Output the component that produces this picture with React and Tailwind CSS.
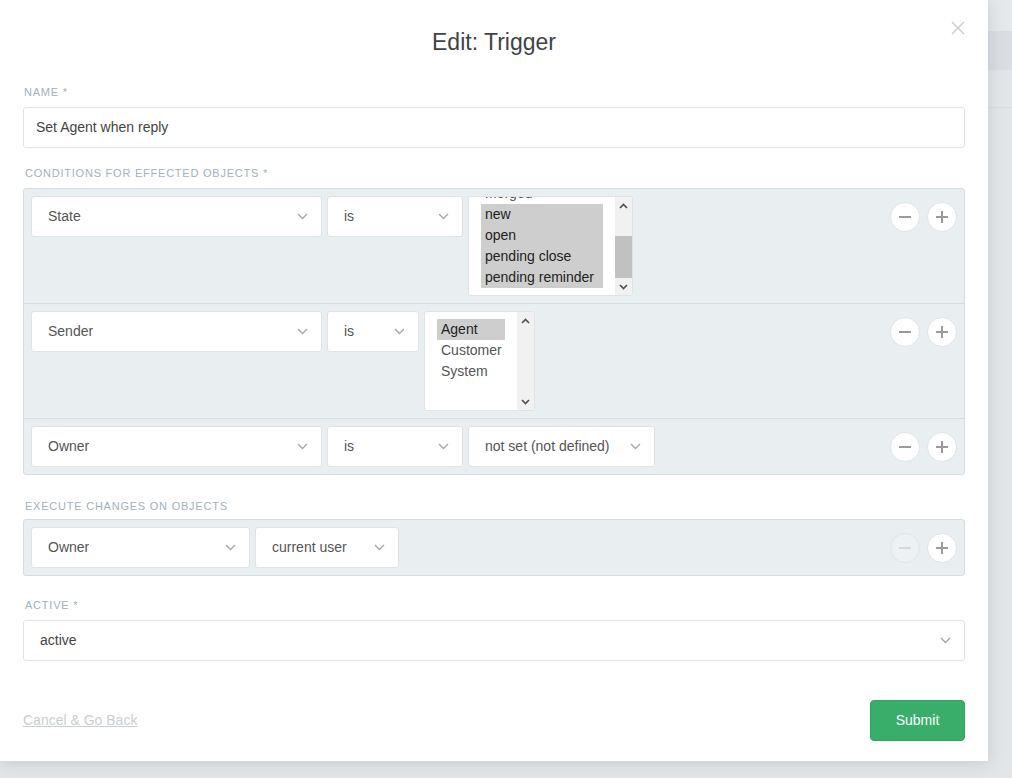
import React from 'react';

const FONT = { fontFamily: '"Liberation Sans", Arial, sans-serif' };

const Chevron = ({ className = '' }) => (
    <svg width="11" height="7" viewBox="0 0 11 7" className={className}>
        <polyline points="1,1 5.5,5.5 10,1" fill="none" stroke="#a3a8ab" strokeWidth="1.4" />
    </svg>
);

const SelectBox = ({ value, width }) => (
    <div
        className="h-[41px] shrink-0 flex items-center justify-between pl-4 pr-[13px] bg-white border border-[#dfe3e6] rounded-[3px] text-[14px] text-[#555]"
        style={{ width }}
    >
        <span className="truncate">{value}</span>
        <Chevron />
    </div>
);

const ScrollArrow = ({ up }) => (
    <div className="h-[17px] flex items-center justify-center">
        <svg width="9" height="6" viewBox="0 0 9 6">
            <polyline
                points={up ? '1,5 4.5,1.5 8,5' : '1,1 4.5,4.5 8,1'}
                fill="none"
                stroke="#505050"
                strokeWidth="1.7"
            />
        </svg>
    </div>
);

// fake multi-select listbox, items highlighted when selected
const ListBox = ({ width, items, offset = 0, thumb }) => (
    <div className="h-[100px] shrink-0 flex bg-white border border-[#dfe3e6] rounded-[3px] overflow-hidden" style={{ width }}>
        <div className="flex-1 overflow-hidden px-3 pt-[7px]">
            <div style={{ marginTop: offset }}>
                {items.map(it => (
                    <div
                        key={it.label}
                        className={`h-[21px] leading-[21px] px-1 text-[14px] whitespace-nowrap ${it.selected ? 'bg-[#cecece] text-[#222]' : 'text-[#555]'}`}
                    >
                        {it.label}
                    </div>
                ))}
            </div>
        </div>
        <div className="w-[17px] bg-[#f1f1f1] flex flex-col">
            <ScrollArrow up />
            <div className="flex-1 flex flex-col justify-end">
                {thumb && <div className="h-[42px] bg-[#c1c1c1]" />}
            </div>
            <ScrollArrow />
        </div>
    </div>
);

const RoundBtn = ({ minus, disabled }) => (
    <div
        className={`w-[30px] h-[30px] rounded-full border border-[#dfe4e7] flex items-center justify-center ${disabled ? 'bg-[#edf1f3]' : 'bg-white'}`}
    >
        <svg width="12" height="12" viewBox="0 0 12 12">
            <line x1="0" y1="6" x2="12" y2="6" stroke={disabled ? '#d3d8db' : '#9a9a9a'} strokeWidth="2" />
            {!minus && <line x1="6" y1="0" x2="6" y2="12" stroke="#9a9a9a" strokeWidth="2" />}
        </svg>
    </div>
);

const Row = ({ children, last, minusDisabled }) => (
    <div className={`flex items-start gap-[5px] p-[7px] ${last ? '' : 'border-b border-[#d5dde2]'}`}>
        {children}
        <div className="ml-auto h-[41px] flex items-center gap-[7px]">
            <RoundBtn minus disabled={minusDisabled} />
            <RoundBtn />
        </div>
    </div>
);

const Label = ({ children, className = '' }) => (
    <div className={`text-[11px] leading-[16px] uppercase tracking-[0.07em] text-[#a3b1b9] ${className}`}>{children}</div>
);

const stateItems = [
    { label: 'merged' },
    { label: 'new', selected: true },
    { label: 'open', selected: true },
    { label: 'pending close', selected: true },
    { label: 'pending reminder', selected: true },
];

const senderItems = [
    { label: 'Agent', selected: true },
    { label: 'Customer' },
    { label: 'System' },
];

export default function App() {
    return (
        <div className="relative w-[1012px] h-[778px] overflow-hidden bg-[#e2e5e8]" style={FONT}>
            {/* page behind the backdrop */}
            <div className="flex flex-col h-full">
                <div className="h-[31px] bg-[#e6e9ec]" />
                <div className="h-[39px] bg-[#dadee2]" />
                <div className="h-[38px] bg-[#e3e6e9] border-b border-[#dadde1]" />
                <div className="flex-1 bg-[#e3e6e9]" />
            </div>

            <div className="absolute top-0 left-0 w-[988px] h-[761px] bg-white shadow-[0_2px_16px_rgba(60,70,80,0.18)] px-[23px]">
                <svg width="14" height="14" viewBox="0 0 14 14" className="absolute top-[21px] right-[23px]">
                    <line x1="1" y1="1" x2="13" y2="13" stroke="#c9cdd0" strokeWidth="1.5" />
                    <line x1="13" y1="1" x2="1" y2="13" stroke="#c9cdd0" strokeWidth="1.5" />
                </svg>

                <h1 className="pt-[28px] h-[84px] text-center text-[23px] leading-[28px] text-[#3f4448]">Edit: Trigger</h1>

                <Label className="pl-[1px]">Name *</Label>
                <div className="mt-[7px] h-[41px] flex items-center px-3 border border-[#dfe3e6] rounded-[3px] text-[14px] text-[#444]">
                    Set Agent when reply
                </div>

                <Label className="mt-[17px] pl-[2px]">Conditions for effected objects *</Label>
                <div className="mt-[7px] bg-[#e9eef1] border border-[#d5dde2] rounded-[3px]">
                    <Row>
                        <SelectBox value="State" width={291} />
                        <SelectBox value="is" width={136} />
                        <ListBox width={165} items={stateItems} offset={-21} thumb />
                    </Row>
                    <Row>
                        <SelectBox value="Sender" width={291} />
                        <SelectBox value="is" width={92} />
                        <ListBox width={111} items={senderItems} />
                    </Row>
                    <Row last>
                        <SelectBox value="Owner" width={291} />
                        <SelectBox value="is" width={136} />
                        <SelectBox value="not set (not defined)" width={187} />
                    </Row>
                </div>

                <Label className="mt-[23px] pl-[2px]">Execute changes on objects</Label>
                <div className="mt-[5px] bg-[#e9eef1] border border-[#d5dde2] rounded-[3px]">
                    <Row last minusDisabled>
                        <SelectBox value="Owner" width={219} />
                        <SelectBox value="current user" width={144} />
                    </Row>
                </div>

                <Label className="mt-[21px] pl-[2px]">Active *</Label>
                <div className="mt-[7px] h-[41px] flex items-center justify-between pl-4 pr-[13px] border border-[#dfe3e6] rounded-[3px] text-[14px] text-[#444]">
                    <span>active</span>
                    <Chevron />
                </div>

                <div className="mt-[39px] flex items-center justify-between">
                    <a className="text-[14px] text-[#c9ced2] underline">Cancel &amp; Go Back</a>
                    <button className="w-[95px] h-[41px] rounded-[4px] bg-[#38ae6a] border border-[#32a161] text-white text-[14px]">
                        Submit
                    </button>
                </div>
            </div>
        </div>
    );
}
